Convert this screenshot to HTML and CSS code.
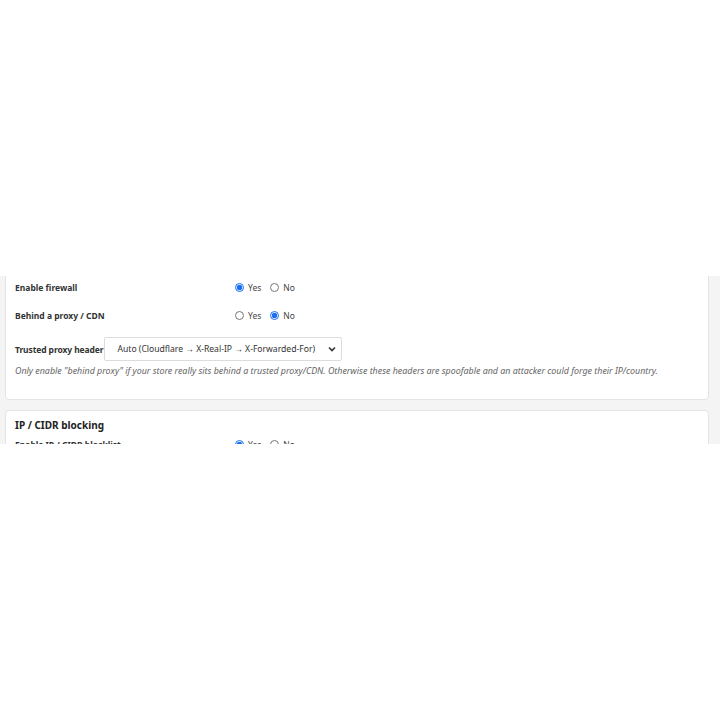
FILE: index.html
```html
<!DOCTYPE html>
<html lang="en">
<head>
    <meta charset="UTF-8">
    <meta name="viewport" content="width=device-width, initial-scale=1.0">
    <title>Security settings</title>
    <link rel="stylesheet" href="styles.css">
</head>
<body>
    <div class="frame">
        <div class="scroller">
            <!--防火墙-->
            <div class="card first">
                <h3 class="card-title">Firewall</h3>
                <div class="row">
                    <span class="label">Enable firewall</span>
                    <div class="choices">
                        <label><input type="radio" name="fw" checked> Yes</label>
                        <label><input type="radio" name="fw"> No</label>
                    </div>
                </div>
                <div class="row">
                    <span class="label">Behind a proxy / CDN</span>
                    <div class="choices">
                        <label><input type="radio" name="proxy"> Yes</label>
                        <label><input type="radio" name="proxy" checked> No</label>
                    </div>
                </div>
                <div class="row inline">
                    <span class="label">Trusted proxy header</span>
                    <select class="select">
                        <option>Auto (Cloudflare → X-Real-IP → X-Forwarded-For)</option>
                    </select>
                </div>
                <p class="hint">Only enable "behind proxy" if your store really sits behind a trusted proxy/CDN. Otherwise these headers are spoofable and an attacker could forge their IP/country.</p>
            </div>
            <!--IP 黑名单-->
            <div class="card">
                <h3 class="card-title">IP / CIDR blocking</h3>
                <div class="row">
                    <span class="label">Enable IP / CIDR blocklist</span>
                    <div class="choices">
                        <label><input type="radio" name="ip" checked> Yes</label>
                        <label><input type="radio" name="ip"> No</label>
                    </div>
                </div>
            </div>
        </div>
    </div>
</body>
</html>
```

FILE: styles.css
```css
*{
    margin: 0;
    padding: 0;
    box-sizing: border-box;
}
body{
    background: #fff;
    font-family: "Noto Sans", "Open Sans", sans-serif;
    color: #333;
}
.frame{
    margin-top: 276px;
    height: 168px;
    overflow: hidden;
    background: #f4f4f4;
    padding: 0 11px 0 5px;
}
.scroller{
    display: flex;
    flex-direction: column;
    gap: 10px;
}
.card{
    background: #fff;
    border: 1px solid #e4e4e4;
    border-radius: 4px;
    padding: 6px 9px 0;
}
.card.first{
    margin-top: -23px;
    padding-bottom: 22px;
}
.card-title{
    font-size: 10px;
    font-weight: 700;
    color: #222;
    line-height: 16px;
    margin-bottom: -3px;
}
.row{
    display: grid;
    grid-template-columns: 220px 1fr;
    align-items: center;
    height: 28px;
    font-size: 8.5px;
}
.label{
    font-weight: 700;
    color: #333;
}
.choices{
    display: flex;
    gap: 9px;
}
.choices label{
    display: flex;
    align-items: center;
    gap: 4px;
    color: #444;
}
.choices input{
    width: 9px;
    height: 9px;
    margin: 0;
    accent-color: #1a6ff0;
}
.row.inline{
    display: flex;
    gap: 1px;
    height: 24px;
    margin-top: 8px;
}
.row.inline .label{
    letter-spacing: -0.1px;
}
.select{
    appearance: none;
    -webkit-appearance: none;
    width: 238px;
    height: 24px;
    border: 1px solid #dcdcdc;
    border-radius: 2px;
    background: #fff url("data:image/svg+xml;utf8,<svg xmlns='http://www.w3.org/2000/svg' width='8' height='6' viewBox='0 0 8 6'><path d='M1 1.5l3 3 3-3' fill='none' stroke='%23333' stroke-width='1.6'/></svg>") no-repeat right 5px center;
    font-family: inherit;
    font-size: 8.6px;
    color: #333;
    padding: 0 14px 0 12px;
}
.hint{
    margin-top: 4px;
    font-size: 8.9px;
    font-style: italic;
    color: #666;
    line-height: 12px;
}
```
